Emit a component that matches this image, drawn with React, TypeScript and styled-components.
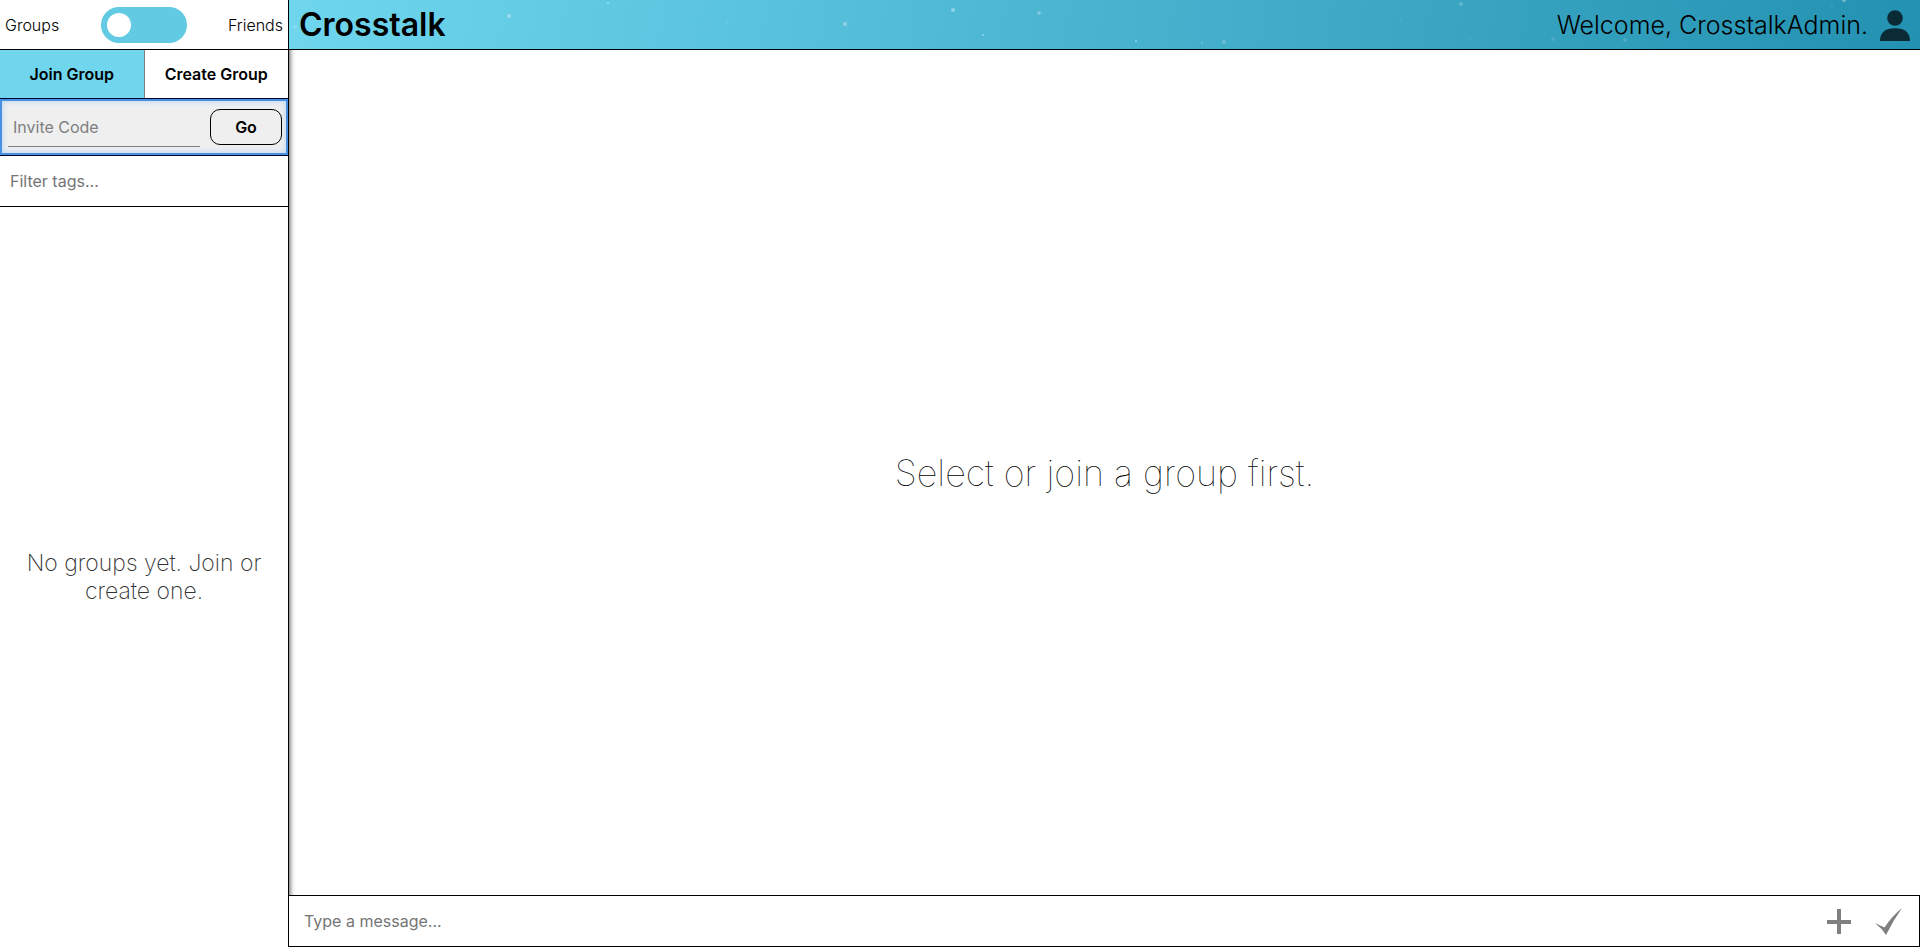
import React, { useState } from "react";
import styled, { createGlobalStyle } from "styled-components";

const GlobalStyle = createGlobalStyle`
  *, *::before, *::after { box-sizing: border-box; }
  body {
    margin: 0;
    color: #000;
    background: #fff;
    font-family: Inter, "Liberation Sans", sans-serif;
    font-size: 16px;
  }
  button, input { font: inherit; color: inherit; }
`;

const Page = styled.div`
  display: flex;
  height: 100vh;
  overflow: hidden;
`;

const Sidebar = styled.aside`
  position: relative;
  z-index: 1;
  display: flex;
  flex-direction: column;
  flex: none;
  width: 289px;
  border-right: 1px solid #000;
  background: #fff;
  box-shadow: 0 0 5px 1px rgba(0, 0, 0, 0.65);
`;

const ModeRow = styled.div`
  display: flex;
  align-items: center;
  justify-content: space-between;
  height: 50px;
  padding: 0 5px;
  border-bottom: 1px solid #000;
  font-weight: 300;
`;

const Switch = styled.input`
  appearance: none;
  display: flex;
  align-items: center;
  width: 86px;
  height: 36px;
  margin: 0;
  padding: 0 6px;
  border-radius: 18px;
  background: #62cbe3;
  cursor: pointer;

  &::before {
    content: "";
    width: 24px;
    height: 24px;
    border-radius: 50%;
    background: #fff;
  }
  &:checked { justify-content: flex-end; }
`;

const Tabs = styled.div`
  display: flex;
  height: 49px;
  border-bottom: 1px solid #00072f;
`;

const Tab = styled.button<{ $active?: boolean }>`
  flex: 1;
  padding: 0;
  border: 0;
  background: ${(p) => (p.$active ? "#6fd6ee" : "#fff")};
  font-weight: 600;
  cursor: pointer;

  &:first-child { border-right: 1px solid #808080; }
`;

const InviteForm = styled.form`
  display: flex;
  align-items: center;
  gap: 10px;
  height: 57px;
  padding: 0 6px 0 8px;
  border-bottom: 1px solid #00072f;
  background: #efefef;
  box-shadow: inset 0 0 0 2px #4a90e2, inset 0 0 6px 2px #b5d3f5;
`;

const InviteInput = styled.input`
  flex: 1;
  min-width: 0;
  height: 40px;
  padding: 0 5px;
  border: 0;
  border-bottom: 1px solid #808080;
  background: transparent;
  outline: none;
  &::placeholder { color: #808080; opacity: 1; }
`;

const GoButton = styled.button`
  width: 72px;
  height: 36px;
  padding: 0;
  border: 1px solid #000;
  border-radius: 10px;
  background: #efefef;
  font-weight: 600;
  cursor: pointer;
`;

const FilterInput = styled.input`
  height: 51px;
  padding: 0 10px;
  border: 0;
  border-bottom: 1px solid #000;
  outline: none;
  &::placeholder { color: #757575; opacity: 1; }
`;

const GroupList = styled.div`
  display: flex;
  flex: 1;
  align-items: center;
  justify-content: center;
  padding: 0 20px;
`;

const EmptyNote = styled.p`
  margin: 0;
  font-size: 23px;
  line-height: 28px;
  font-weight: 200;
  color: #333;
  text-align: center;
`;

const Main = styled.main`
  display: flex;
  flex: 1;
  flex-direction: column;
  min-width: 0;
`;

const Header = styled.header`
  position: relative;
  z-index: 2;
  display: flex;
  align-items: center;
  justify-content: space-between;
  height: 50px;
  padding: 0 10px;
  border-bottom: 1px solid #000;
  background: linear-gradient(100deg, #6fd6ee, #2391b1);
`;

const Stars = styled.svg`
  position: absolute;
  inset: 0;
  width: 100%;
  height: 100%;
  pointer-events: none;
`;

const Title = styled.h1`
  position: relative;
  margin: 0;
  font-size: 32px;
  line-height: 40px;
  font-weight: 600;
`;

const Account = styled.div`
  position: relative;
  display: flex;
  align-items: center;
  gap: 12px;
  font-size: 25px;
  font-weight: 300;
`;

const IconButton = styled.button`
  display: flex;
  padding: 0;
  border: 0;
  background: transparent;
  cursor: pointer;
`;

const Conversation = styled.section`
  display: flex;
  flex: 1;
  align-items: center;
  justify-content: center;
`;

const Prompt = styled.p`
  margin: 0;
  font-size: 36px;
  line-height: 48px;
  font-weight: 100;
`;

const Composer = styled.form`
  position: relative;
  z-index: 2;
  display: flex;
  align-items: center;
  gap: 24px;
  height: 52px;
  margin-left: -1px;
  padding: 0 17px 0 15px;
  border: 1px solid #000;
  background: #fff;
`;

const MessageInput = styled.input`
  flex: 1;
  min-width: 0;
  height: 50px;
  padding: 0;
  border: 0;
  outline: none;
  &::placeholder { color: #757575; opacity: 1; }
`;

const stars = [
  { x: 6, y: 27, r: 2, o: 0.15 },
  { x: 220, y: 16, r: 2, o: 0.35 },
  { x: 319, y: 3, r: 1, o: 0.4 },
  { x: 438, y: 22, r: 1, o: 0.15 },
  { x: 556, y: 24, r: 2, o: 0.35 },
  { x: 664, y: 10, r: 2, o: 0.35 },
  { x: 694, y: 35, r: 1, o: 0.4 },
  { x: 750, y: 13, r: 2, o: 0.25 },
  { x: 847, y: 41, r: 1, o: 0.4 },
  { x: 913, y: 43, r: 1, o: 0.2 },
  { x: 935, y: 42, r: 2, o: 0.2 },
  { x: 1112, y: 19, r: 1, o: 0.1 },
  { x: 1172, y: 4, r: 2, o: 0.2 },
  { x: 1181, y: 39, r: 1, o: 0.1 },
  { x: 1264, y: 39, r: 2, o: 0.1 },
  { x: 1336, y: 40, r: 2, o: 0.15 },
  { x: 1543, y: 6, r: 1, o: 0.15 },
  { x: 1555, y: 0, r: 2, o: 0.35 },
];

export default function App() {
  const [tab, setTab] = useState<"join" | "create">("join");

  return (
    <>
      <GlobalStyle />
      <Page>
        <Sidebar>
          <ModeRow>
            <span>Groups</span>
            <Switch type="checkbox" role="switch" aria-label="Show friends" />
            <span>Friends</span>
          </ModeRow>
          <Tabs>
            <Tab type="button" $active={tab === "join"} onClick={() => setTab("join")}>
              Join Group
            </Tab>
            <Tab type="button" $active={tab === "create"} onClick={() => setTab("create")}>
              Create Group
            </Tab>
          </Tabs>
          <InviteForm onSubmit={(e) => e.preventDefault()}>
            <InviteInput aria-label="Invite code" placeholder="Invite Code" />
            <GoButton type="submit">Go</GoButton>
          </InviteForm>
          <FilterInput aria-label="Filter tags" placeholder="Filter tags..." />
          <GroupList>
            <EmptyNote>No groups yet. Join or create one.</EmptyNote>
          </GroupList>
        </Sidebar>
        <Main>
          <Header>
            <Stars aria-hidden="true">
              {stars.map((s) => (
                <circle key={s.x} cx={s.x} cy={s.y} r={s.r} fill="#fff" opacity={s.o} />
              ))}
            </Stars>
            <Title>Crosstalk</Title>
            <Account>
              <span>Welcome, CrosstalkAdmin.</span>
              <IconButton type="button" aria-label="Account">
                <svg width="30" height="32" viewBox="0 0 30 32" fill="#0a2b35">
                  <circle cx="15" cy="9" r="7.8" />
                  <path d="M0 32C0 23.5 5 19.3 15 19.3S30 23.5 30 32Z" />
                </svg>
              </IconButton>
            </Account>
          </Header>
          <Conversation>
            <Prompt>Select or join a group first.</Prompt>
          </Conversation>
          <Composer onSubmit={(e) => e.preventDefault()}>
            <MessageInput aria-label="Message" placeholder="Type a message..." />
            <IconButton type="button" aria-label="Add attachment">
              <svg width="24" height="26" viewBox="0 0 24 26" fill="#808080">
                <path d="M10 1H14V12H24V16H14V26H10V16H0V12H10Z" />
              </svg>
            </IconButton>
            <IconButton type="submit" aria-label="Send message">
              <svg width="27" height="28" viewBox="0 0 27 28" fill="#808080">
                <path d="M0 16L9.500 20.500Q17 9 27 1Q18.500 13 11 28Q6.500 21 0 16Z" />
              </svg>
            </IconButton>
          </Composer>
        </Main>
      </Page>
    </>
  );
}
